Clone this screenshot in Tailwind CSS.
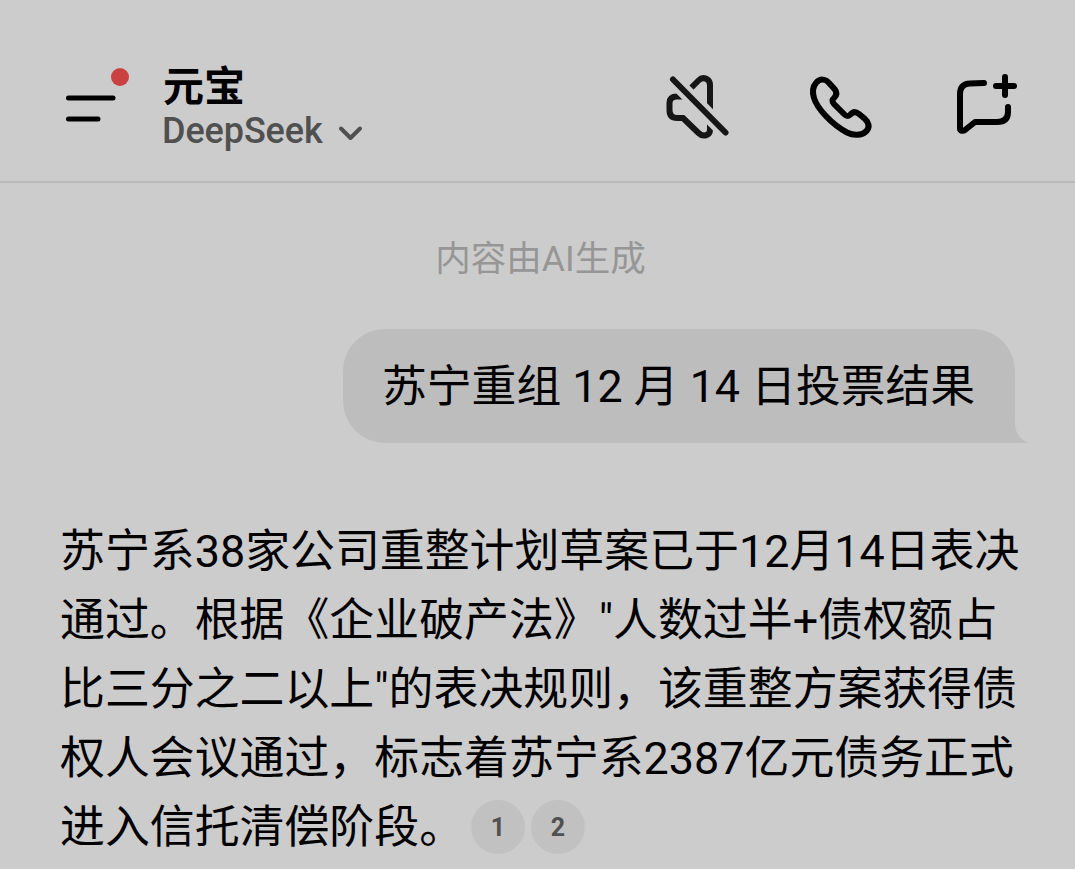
<!DOCTYPE html>
<html lang="zh-CN">
<head>
    <meta charset="UTF-8">
    <meta name="viewport" content="width=device-width, initial-scale=1.0">
    <title>元宝</title>
    <script src="https://cdn.jsdelivr.net/npm/@tailwindcss/browser@4"></script>
</head>
<body class="h-[869px] overflow-hidden bg-[#cccccc] font-[Roboto,'Noto_Sans_CJK_SC',sans-serif] text-black">

    <!-- 顶部导航 -->
    <header class="flex h-[183px] items-start border-b-2 border-[#bababa] pl-[62px] pr-[53px] pt-[62px]">
        <button class="h-[68px] w-[70px]" aria-label="菜单">
            <svg class="block" width="70" height="68" viewBox="0 0 70 68" fill="none">
                <path d="M6.5 36H51M6.5 57H36" stroke="#000" stroke-width="5" stroke-linecap="round"/>
                <circle cx="58" cy="15" r="9" fill="#c94141"/>
            </svg>
        </button>
        <div class="ml-[30px]">
            <h1 class="h-[48px] pl-px pt-px text-[41px] font-bold leading-[48px]">元宝</h1>
            <div class="flex h-[42px] items-center text-[#505050]">
                <span class="text-[36px] font-medium leading-[42px] tracking-[-0.1px]">DeepSeek</span>
                <svg class="ml-[15px] mt-[6px]" width="26" height="18" viewBox="0 0 26 18" fill="none" stroke="currentColor" stroke-width="4" stroke-linecap="round" stroke-linejoin="round">
                    <path d="M3 3.5L12.500 13L22 3.5"/>
                </svg>
            </div>
        </div>
        <div class="ml-auto flex gap-[63.500px] pt-[8px]">
            <!-- 静音 -->
            <svg width="80" height="75" viewBox="655 70 80 75" fill="none" stroke="#161616" stroke-width="6">
                <path d="M684 96.500H677Q669.500 96.500 669.500 103V110Q669.500 118 677 118H683L698.500 133C703 137.500 710 135.500 710 130V85C710 78.500 703 76 698.500 80.500L686 93"/>
                <path d="M673 79.500L725.500 132.500" stroke="#cccccc" stroke-width="15"/>
                <path d="M673 79.500L725.500 132.500" stroke-linecap="round"/>
            </svg>
            <!-- 电话 -->
            <svg width="80" height="75" viewBox="799 70 80 75" fill="none" stroke="#000" stroke-width="6" stroke-linejoin="round">
                <path d="M816 83C820 78 826 79 829 83L834.500 89C837 92 837 95 834 98C831.500 100 832 101.500 834 104L844 114C846.500 116.500 848 117 850.500 114.500C853 111.500 856 111.500 859 114L864.500 118.500C869 122.500 870 127 866.500 131C862 136 853 135.500 847 132.500C831 124 817 108 814 98C812.500 93 812.500 87 816 83Z"/>
            </svg>
            <!-- 新对话 -->
            <svg width="80" height="75" viewBox="942 70 80 75" fill="none" stroke="#000" stroke-width="6" stroke-linecap="round" stroke-linejoin="round">
                <path d="M984 83L970 83.500Q960 84 960 94V128.500C960 131 963 131.500 965 130L975 122H997Q1008 122 1008 112V107"/>
                <path d="M1005 77V95M996 86H1014"/>
            </svg>
        </div>
    </header>

    <!-- 对话内容 -->
    <main>
        <p class="mt-[51px] h-[50px] pl-[6px] text-center text-[35.500px] leading-[50px] text-[#969696]">内容由AI生成</p>

        <div class="mt-[45px] flex justify-end pr-[60px]">
            <div class="relative flex h-[114px] w-[672px] items-center rounded-[42px] rounded-br-none bg-[#bdbdbd] pl-[39px] pt-px">
                <p class="whitespace-nowrap text-[44.800px] leading-[69px]">苏宁重组 12 月 14 日投票结果</p>
                <svg class="absolute bottom-0 left-full" width="14" height="20" viewBox="0 0 14 20">
                    <path d="M0 0V20H14C5 17 0 9 0 0Z" fill="#bdbdbd"/>
                </svg>
            </div>
        </div>

        <p class="mt-[74px] whitespace-nowrap pl-[60px] text-[44.900px] leading-[69px]">
            苏宁系38家公司重整计划草案已于12月14日表决<br>
            通过。根据《企业破产法》"人数过半+债权额占<br>
            比三分之二以上"的表决规则，该重整方案获得债<br>
            权人会议通过，标志着苏宁系2387亿元债务正式<br>
            <span class="flex h-[69px] items-center">进入信托清偿阶段。
                <span class="mb-[2px] ml-[7px] flex gap-[6px] text-[25px] font-bold text-[#505050]">
                    <span class="flex size-[54px] items-center justify-center rounded-full bg-[#c1c1c1] pt-[2px]">1</span>
                    <span class="flex size-[54px] items-center justify-center rounded-full bg-[#c1c1c1] pt-[2px]">2</span>
                </span>
            </span>
        </p>
    </main>

</body>
</html>
